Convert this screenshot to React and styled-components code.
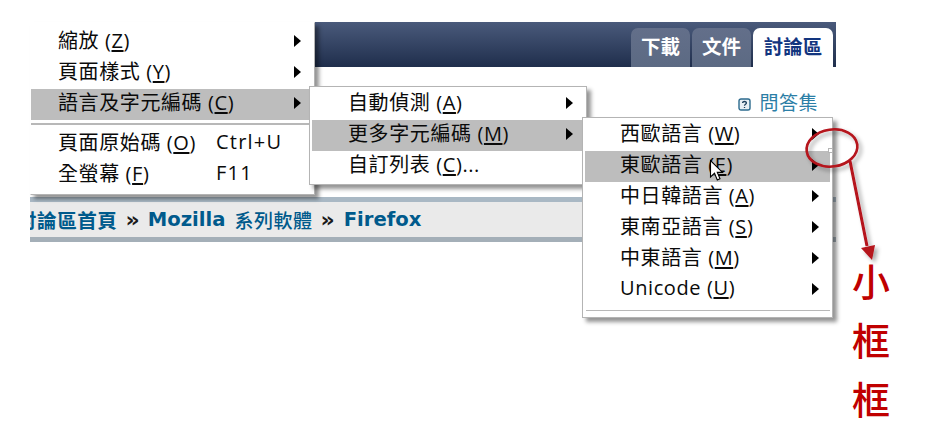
import React from "react"
import styled, { createGlobalStyle } from "styled-components"

const GlobalStyle = createGlobalStyle`
html, body {
  margin: 0;
  padding: 0;
  background: #fff;
}
`;

const Page = styled.div`
position: relative;
width: 944px;
height: 436px;
overflow: hidden;
background: #fff;
font-family: "Open Sans", "Noto Sans CJK TC", sans-serif;
`;

const Site = styled.div`
width: 806px;
margin-left: 30px;
padding-top: 22px;
overflow: hidden;
`;

const Header = styled.div`
height: 45px;
display: flex;
justify-content: flex-end;
align-items: flex-end;
gap: 2px;
padding-right: 3px;
background: linear-gradient(#4a5a7b, #1f2e4c);
`;

const Tab = styled.div`
width: ${props => props.$width}px;
height: 39px;
display: flex;
align-items: center;
justify-content: center;
box-sizing: border-box;
padding-bottom: 5px;
border-radius: 7px 7px 0 0;
font-size: 19.5px;
font-weight: 700;
color: ${props => props.$active ? "#12357f" : "#fff"};
background: ${props => props.$active ? "#fff" : "linear-gradient(#636f8a, #5c6a83)"};
`;

const FaqRow = styled.div`
height: 130px;
box-sizing: border-box;
display: flex;
justify-content: flex-end;
align-items: flex-start;
gap: 8px;
padding: 23px 18px 0 0;
font-size: 19px;
line-height: 26px;
letter-spacing: 0.5px;
color: #2b7ea6;
`;

const FaqIcon = styled.svg`
width: 13px;
height: 13px;
margin-top: 8px;
`;

const Breadcrumb = styled.div`
height: 35px;
display: flex;
align-items: center;
gap: 8px;
border-top: 5px solid #a9b8c4;
border-bottom: 5px solid #a4afb8;
background: #eaeaea;
white-space: nowrap;
color: #005a8c;
font-family: "DejaVu Sans", "Noto Sans CJK TC", sans-serif;
`;

const Crumb = styled.span`
margin-left: ${props => props.$shift || 0}px;
font-size: ${props => props.$small ? 19 : 19.6}px;
font-weight: ${props => props.$small ? 500 : 700};
font-family: ${props => props.$cjk ? '"Noto Sans CJK TC", sans-serif' : "inherit"};
letter-spacing: ${props => props.$cjk ? "0.5px" : "0"};
`;

const Chevron = styled.span`
color: #1a1a1a;
font-size: 22px;
font-weight: 700;
line-height: 22px;
`;

const Menu = styled.div`
position: absolute;
left: ${props => props.$left}px;
top: ${props => props.$top}px;
width: ${props => props.$width}px;
box-sizing: border-box;
padding: ${props => props.$pad || "2px"};
background: #fff;
border: 1px solid #b4b4b4;
border-left-color: ${props => props.$flushLeft ? "#fff" : "#b4b4b4"};
border-top-color: ${props => props.$flushLeft ? "#fff" : "#b4b4b4"};
box-shadow: 4px 4px 4px rgba(0, 0, 0, 0.42);
`;

const Item = styled.div`
height: 31px;
box-sizing: border-box;
display: flex;
align-items: center;
padding-left: ${props => props.$indent}px;
padding-bottom: 4px;
background: ${props => props.$hover ? "#bdbdbd" : "transparent"};
color: #0a0a0a;
font-size: 20px;
letter-spacing: 0.6px;
white-space: nowrap;
`;

const Label = styled.span`
flex: ${props => props.$fixed ? `0 0 ${props.$fixed}px` : "1"};
margin-bottom: 2px;
`;

const Key = styled.u`
text-underline-offset: 2px;
`;

const Shortcut = styled.span`
flex: 1;
margin-bottom: 2px;
letter-spacing: 1.2px;
`;

const Arrow = styled.span`
flex: none;
width: 0;
height: 0;
margin-right: ${props => props.$right}px;
border-top: 6px solid transparent;
border-bottom: 6px solid transparent;
border-left: 7px solid #000;
`;

const Separator = styled.div`
height: ${props => props.$height}px;
margin: ${props => props.$margin};
background: #b8b8b8;
`;

const Cursor = styled.svg`
position: absolute;
left: 709px;
top: 159px;
width: 16px;
height: 23px;
`;

const Annotation = styled.svg`
position: absolute;
left: 800px;
top: 120px;
width: 100px;
height: 160px;
overflow: visible;
`;

const Handle = styled.div`
position: absolute;
left: 828px;
top: 148px;
width: 5px;
height: 5px;
box-sizing: border-box;
border: 1px solid #b4b4b4;
background: #fff;
`;

const Note = styled.div`
position: absolute;
left: 852px;
top: 250px;
width: 38px;
display: flex;
flex-direction: column;
color: #c00000;
font-family: "Noto Sans CJK TC", serif;
font-size: 38px;
font-weight: 500;
line-height: 59px;
`;

const Entry = ({ name, hotkey, tail }) => (
  <Label>
    {name} (<Key>{hotkey}</Key>){tail}
  </Label>
);

const App = () => {
  return (<Page>
    <GlobalStyle/>
    <Site>
      <Header>
        <Tab $width={59}>下載</Tab>
        <Tab $width={59}>文件</Tab>
        <Tab $width={80} $active>討論區</Tab>
      </Header>
      <FaqRow>
        <FaqIcon viewBox="0 0 13 13">
          <rect x="1" y="1" width="11" height="11" rx="2" fill="#e8eef3" stroke="#2d6b8e" strokeWidth="1.4"/>
          <path d="M4.6 5 C4.6 3 8.4 3 8.4 5 C8.4 6.4 6.5 6.2 6.5 7.8 M6.5 9 V10" fill="none" stroke="#1d3f5c" strokeWidth="1.3"/>
        </FaqIcon>
        問答集
      </FaqRow>
      <Breadcrumb>
        <Crumb $shift={-13} $cjk>討論區首頁</Crumb>
        <Chevron>»</Chevron>
        <Crumb>Mozilla</Crumb>
        <Crumb $small $cjk $shift={1}>系列軟體</Crumb>
        <Chevron>»</Chevron>
        <Crumb $shift={1}>Firefox</Crumb>
      </Breadcrumb>
    </Site>

    <Menu $left={30} $top={22} $width={285} $pad="4px 0 3px" $flushLeft>
      <Item $indent={27}>
        <Entry name="縮放" hotkey="Z"/>
        <Arrow $right={13}/>
      </Item>
      <Item $indent={27}>
        <Entry name="頁面樣式" hotkey="Y"/>
        <Arrow $right={13}/>
      </Item>
      <Item $indent={27} $hover>
        <Entry name="語言及字元編碼" hotkey="C"/>
        <Arrow $right={13}/>
      </Item>
      <Separator $height={2} $margin="3px 0 4px"/>
      <Item $indent={27}>
        <Label $fixed={158}><Entry name="頁面原始碼" hotkey="O"/></Label>
        <Shortcut>Ctrl+U</Shortcut>
      </Item>
      <Item $indent={27}>
        <Label $fixed={158}><Entry name="全螢幕" hotkey="F"/></Label>
        <Shortcut>F11</Shortcut>
      </Item>
    </Menu>

    <Menu $left={309} $top={86} $width={278}>
      <Item $indent={36}>
        <Entry name="自動偵測" hotkey="A"/>
        <Arrow $right={11}/>
      </Item>
      <Item $indent={36} $hover>
        <Entry name="更多字元編碼" hotkey="M"/>
        <Arrow $right={11}/>
      </Item>
      <Item $indent={36}>
        <Entry name="自訂列表" hotkey="C" tail="..."/>
      </Item>
    </Menu>

    <Menu $left={582} $top={117} $width={251}>
      <Item $indent={35}>
        <Entry name="西歐語言" hotkey="W"/>
        <Arrow $right={11}/>
      </Item>
      <Item $indent={35} $hover>
        <Entry name="東歐語言" hotkey="E"/>
        <Arrow $right={11}/>
      </Item>
      <Item $indent={35}>
        <Entry name="中日韓語言" hotkey="A"/>
        <Arrow $right={11}/>
      </Item>
      <Item $indent={35}>
        <Entry name="東南亞語言" hotkey="S"/>
        <Arrow $right={11}/>
      </Item>
      <Item $indent={35}>
        <Entry name="中東語言" hotkey="M"/>
        <Arrow $right={11}/>
      </Item>
      <Item $indent={35}>
        <Label>Unicode (<Key>U</Key>)</Label>
        <Arrow $right={11}/>
      </Item>
      <Separator $height={1} $margin="4px 0 4px 1px"/>
    </Menu>

    <Handle/>

    <Cursor viewBox="0 0 16 23">
      <path d="M1.5 1.5 V18 L5.5 14.3 L8.3 21 L11 19.8 L8.3 13.4 H13.5 Z" fill="#fff" stroke="#000" strokeWidth="1.1"/>
    </Cursor>

    <Annotation viewBox="0 0 100 160">
      <defs>
        <filter id="soft" x="-30%" y="-30%" width="170%" height="170%">
          <feDropShadow dx="3" dy="3" stdDeviation="2" floodColor="#000" floodOpacity="0.35"/>
        </filter>
      </defs>
      <g filter="url(#soft)">
        <ellipse cx="32" cy="28" rx="25.5" ry="18.5" transform="rotate(-8 32 28)" fill="none" stroke="#b5121b" strokeWidth="2.6"/>
        <path d="M50 41 L67 126" fill="none" stroke="#b5121b" strokeWidth="3"/>
        <path d="M61 128 L75 125 L72 140 Z" fill="#b5121b"/>
      </g>
    </Annotation>

    <Note>
      <span>小</span>
      <span>框</span>
      <span>框</span>
    </Note>
  </Page>)
};

export default App
